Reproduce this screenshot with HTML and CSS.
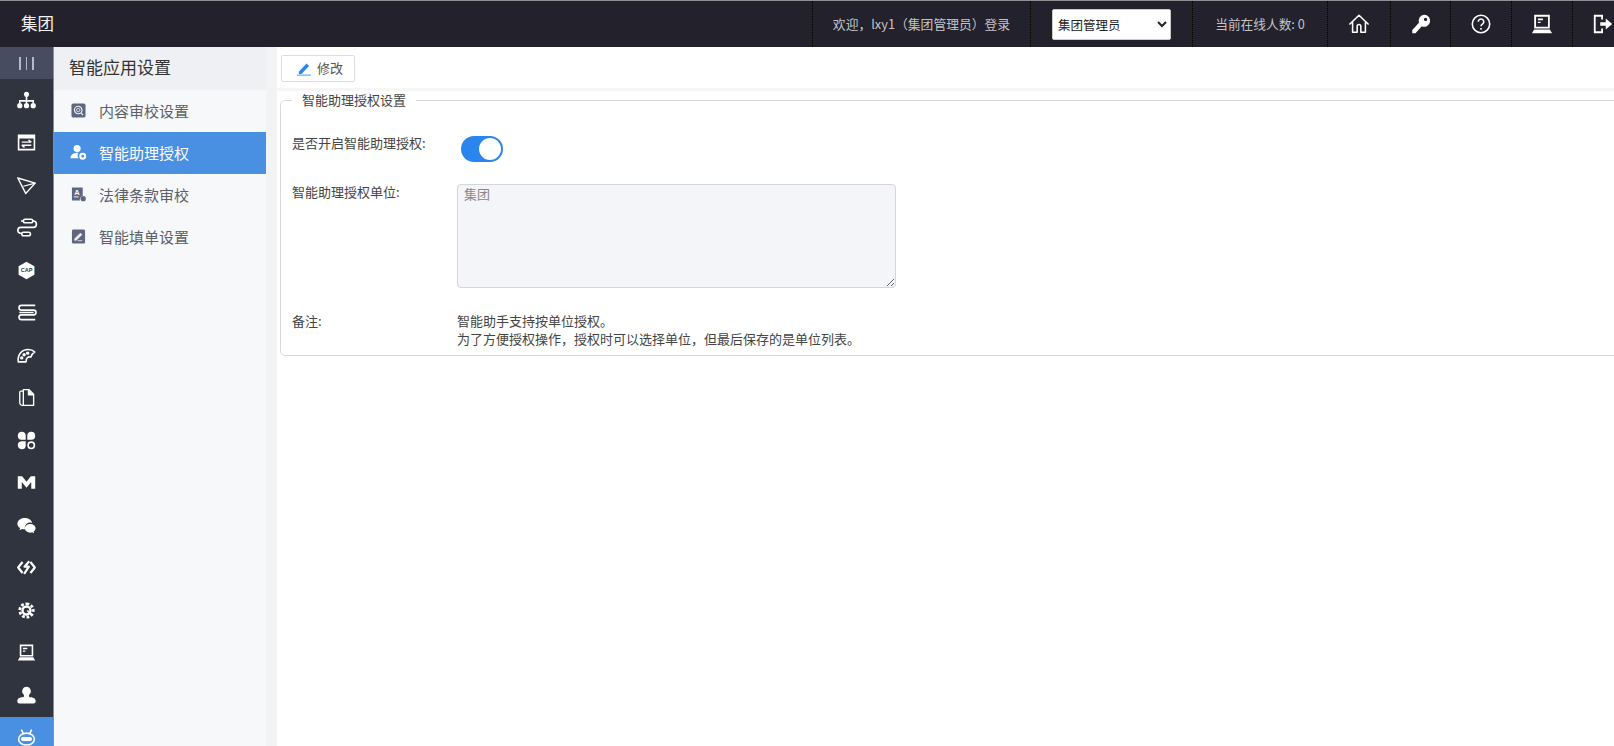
FILE: index.html
```html
<!DOCTYPE html>
<html lang="zh-CN">
<head>
<meta charset="utf-8">
<title>智能应用设置</title>
<link rel="stylesheet" href="styles.css">
</head>
<body>
<header class="topbar">
  <div class="brand">集团</div>
  <div class="cell cell-user">欢迎，lxy1（集团管理员）登录</div>
  <div class="cell cell-role">
    <select class="role-select"><option>集团管理员</option></select>
  </div>
  <div class="cell cell-online">当前在线人数: 0</div>
  <div class="cell cell-icon cell-w63">
    <svg class="ico-top" viewBox="0 0 24 24" fill="none" stroke="currentColor" stroke-width="1.7" stroke-linejoin="round"><path d="M1.500 12.500 12 2.500l10.500 10M5 10v11h5v-6.500a2 2 0 0 1 4 0V21h5V10"/></svg>
  </div>
  <div class="cell cell-icon cell-w60">
    <svg class="ico-top" viewBox="0 0 24 24" fill="currentColor"><path d="M15.500 2a6.500 6.500 0 1 1-2.700 12.400L6 22H2.500v-3.500l7.300-7.800A6.500 6.500 0 0 1 15.500 2zm1.500 3.200a1.800 1.800 0 1 0 0 3.600 1.800 1.800 0 0 0 0-3.600z"/></svg>
  </div>
  <div class="cell cell-icon cell-w61">
    <svg class="ico-top" viewBox="0 0 24 24" fill="none" stroke="currentColor" stroke-width="1.700"><circle cx="12" cy="12" r="9.500"/><path d="M9 9.500a3 3 0 1 1 4.500 2.600c-1 .6-1.500 1.200-1.500 2.400"/><path d="M12 16.300v1.900"/></svg>
  </div>
  <div class="cell cell-icon cell-w61">
    <svg class="ico-top" viewBox="0 0 24 24" fill="currentColor"><path fill-rule="evenodd" d="M3.500 2h17v15h-17zm2 2v11h13V4z"/><path d="M7.500 6h5.500v2H7.500zM7.500 9.500h3v1.500h-3zM3.500 18h17l2.500 4H1z"/></svg>
  </div>
  <div class="cell cell-icon cell-w60">
    <svg class="ico-top" viewBox="0 0 24 24" fill="none" stroke="currentColor" stroke-width="2"><path d="M11 7V3H3v18h8v-4"/><path d="M9 10h6V6l7 6-7 6v-4H9z" fill="currentColor" stroke="none"/></svg>
  </div>
</header>
<div class="shell">
  <nav class="rail">
    <div class="rail-toggle"><span class="bar"></span><span class="bar"></span><span class="bar"></span></div>
    <div class="rail-item"><svg class="ico-rail" viewBox="0 0 24 24" fill="currentColor"><circle cx="12" cy="4" r="3.200"/><path d="M11 6h2v5.500h8.500V15h-2v-1.500H13V15h-2v-1.500H4.500V15h-2v-3.500H11z"/><circle cx="3.500" cy="18.500" r="3.300"/><circle cx="12" cy="18.500" r="3.300"/><circle cx="20.500" cy="18.500" r="3.300"/></svg></div>
    <div class="rail-item"><svg class="ico-rail" viewBox="0 0 24 24"><path fill="currentColor" fill-rule="evenodd" d="M1 2h22v20H1zm2 5v13h18V7z"/><path d="M6 11.500h12M14.500 8.800l3.500 2.700M18 15.500H6M9.500 18.200 6 15.500" fill="none" stroke="currentColor" stroke-width="1.800"/></svg></div>
    <div class="rail-item"><svg class="ico-rail" viewBox="0 0 24 24" fill="none" stroke="currentColor" stroke-width="1.800" stroke-linejoin="round"><path d="M1 2.500 23 9 11 22z"/><path d="M23 9 8 13" stroke-width="1.500"/></svg></div>
    <div class="rail-item"><svg class="ico-rail" viewBox="0 0 24 24" fill="none" stroke="currentColor" stroke-width="2"><rect x="8" y="1.500" width="12" height="4.500" rx="2.250"/><rect x="6" y="18" width="11" height="4.500" rx="2.250"/><path d="M20 3.800h.5a4 4 0 0 1 0 8H5a3.800 3.800 0 0 0-1 7.500H6M8 3.800H5"/></svg></div>
    <div class="rail-item"><svg class="ico-rail" viewBox="0 0 24 24"><path fill="currentColor" d="M12 1l10 5.500v11L12 23 2 17.500v-11z"/><text class="ico-cap" x="12" y="14.500" text-anchor="middle">CAP</text></svg></div>
    <div class="rail-item"><svg class="ico-rail" viewBox="0 0 24 24" fill="none" stroke="currentColor" stroke-width="2"><path d="M23 3H5.500a3 3 0 0 0 0 6H21M3 12h18M21 9a3 3 0 0 1 0 6M23 21H5.500a3 3 0 0 1 0-6H21"/></svg></div>
    <div class="rail-item"><svg class="ico-rail" viewBox="0 0 24 24" fill="none" stroke="currentColor" stroke-width="2" stroke-linejoin="round"><path d="M1.500 20C.5 11 6 4.500 14 4.500c4 0 7 1.500 8.500 3-2.500 1.500-4 3.500-5 6.500-3-1-6.500 1-6 6z"/><circle cx="9" cy="11" r="1.200" fill="currentColor"/><circle cx="13.500" cy="9" r="1.200" fill="currentColor"/><circle cx="6" cy="15" r="1.200" fill="currentColor"/></svg></div>
    <div class="rail-item"><svg class="ico-rail" viewBox="0 0 24 24" fill="none" stroke="currentColor" stroke-width="1.700" stroke-linejoin="round"><path d="M8 6V2h7l6 6v14H8z"/><path d="M8 4H5a1.500 1.500 0 0 0-1.500 1.500v13A3.500 3.500 0 0 0 7 22h1"/><path d="M14.500 2.500V8.500H20.500" fill="currentColor"/></svg></div>
    <div class="rail-item"><svg class="ico-rail" viewBox="0 0 24 24" fill="currentColor"><path d="M11 11H5.500a5 5 0 1 1 5.500-5.500zM13 11V5.500a5 5 0 1 1 5.500 5.500zM11 13v5.500A5 5 0 1 1 5.500 13z"/><circle cx="18" cy="18" r="4" fill="none" stroke="currentColor" stroke-width="2"/></svg></div>
    <div class="rail-item"><svg class="ico-rail" viewBox="0 0 24 24" fill="currentColor"><path d="M1 20V4h5.500L12 11l5.500-7H23v16h-5v-8.500L12 18.500 6 11.500V20z"/></svg></div>
    <div class="rail-item"><svg class="ico-rail" viewBox="0 0 24 24" fill="currentColor"><path d="M9.500 2.500C4.500 2.500.5 5.700.5 9.700c0 2.300 1.300 4.200 3.400 5.500l-.8 2.800 3.200-1.700c1 .3 2.100.5 3.300.5h.6a6.800 6.800 0 0 1 9-8.200C18.100 5 14.200 2.500 9.500 2.500z"/><path d="M16.800 10c-3.800 0-6.900 2.500-6.900 5.500s3.100 5.500 6.900 5.500c.8 0 1.700-.1 2.400-.4l2.400 1.300-.6-2.200c1.500-1 2.500-2.500 2.500-4.200 0-3-3-5.500-6.700-5.500z"/></svg></div>
    <div class="rail-item"><svg class="ico-rail" viewBox="0 0 24 24" fill="none" stroke="currentColor" stroke-width="2.800" stroke-linejoin="round"><path d="M7 5 1.500 12 7 19M17 5l5.500 7-5.500 7"/><path d="M15.500 4 9.500 11h5.500l-6 9"/></svg></div>
    <div class="rail-item"><svg class="ico-rail" viewBox="0 0 24 24" fill="none" stroke="currentColor"><path stroke-width="3.500" stroke-dasharray="3.500 2.250" d="M12 3.500a8.500 8.500 0 1 1 0 17 8.500 8.500 0 0 1 0-17z"/><circle cx="12" cy="12" r="5" stroke-width="3"/><path stroke-width="2.200" d="M13 12l6 6"/></svg></div>
    <div class="rail-item"><svg class="ico-rail" viewBox="0 0 24 24" fill="currentColor"><path fill-rule="evenodd" d="M3.500 2h17v15h-17zm2 2v11h13V4z"/><path d="M7.500 6h5.500v2H7.500zM7.500 9.500h3v1.500h-3zM3.500 18h17l2.500 4H1z"/></svg></div>
    <div class="rail-item"><svg class="ico-rail" viewBox="0 0 24 24" fill="currentColor"><path d="M12 1a5.500 5.500 0 0 1 3.500 9.700c-.5 1-.5 2.300 0 3.300 3.500.5 8 1 8 4.500v1c0 1.500-1 2.500-2.500 2.500H3c-1.500 0-2.500-1-2.500-2.500v-1c0-3.500 4.500-4 8-4.500.5-1 .5-2.300 0-3.300A5.500 5.500 0 0 1 12 1z"/></svg></div>
    <div class="rail-item rail-item-active"><svg class="ico-rail" viewBox="0 0 24 24" fill="none" stroke="currentColor" stroke-width="2"><ellipse cx="12" cy="14" rx="10" ry="7.500"/><rect x="5" y="11.500" width="14" height="5" rx="2.500" fill="currentColor" stroke="none"/><path d="M5.500 2 8 7M18.500 2 16 7"/></svg></div>
  </nav>
  <aside class="side">
    <h2 class="side-title">智能应用设置</h2>
    <ul class="side-list">
      <li class="side-item">
        <svg class="ico-side" viewBox="0 0 16 16"><rect width="15" height="15" x=".5" y=".5" rx="2" fill="currentColor"/><circle cx="7.700" cy="7.500" r="4" fill="none" stroke="#f7f8fa" stroke-width="1.200"/><circle cx="7.700" cy="7.500" r="1.800" fill="none" stroke="#f7f8fa" stroke-width=".8"/><path d="M10.500 10.500l2.500 2.500" stroke="#f7f8fa" stroke-width="1.200"/></svg>
        <span>内容审校设置</span>
      </li>
      <li class="side-item side-item-active">
        <svg class="ico-side" viewBox="0 0 16 16" fill="currentColor"><circle cx="6.500" cy="3.800" r="3.800"/><path d="M-.5 14c0-3.500 2.500-5.800 8.500-5.800-1.300 1.800-1.300 4 0 5.800z"/><circle cx="12.500" cy="12" r="2.600" fill="none" stroke="currentColor" stroke-width="2.200"/></svg>
        <span>智能助理授权</span>
      </li>
      <li class="side-item">
        <svg class="ico-side" viewBox="0 0 16 16"><path fill="currentColor" d="M1 .5h11.500v9a4 4 0 0 0-3 5H1z"/><circle cx="13" cy="12.500" r="2.800" fill="currentColor"/><text class="ico-letter" x="3.500" y="8">A</text><path d="M3 10.500h5" stroke="#f7f8fa"/></svg>
        <span>法律条款审校</span>
      </li>
      <li class="side-item">
        <svg class="ico-side" viewBox="0 0 16 16"><rect width="14" height="15" x="1" y=".5" rx="1.500" fill="currentColor"/><path d="M4 10.500 10 4.500l1.500 1.500-6 6H4zM7 12.500h5" stroke="#f7f8fa" fill="#f7f8fa" stroke-width=".8"/></svg>
        <span>智能填单设置</span>
      </li>
    </ul>
  </aside>
  <div class="gutter"></div>
  <main class="main">
    <div class="toolbar">
      <button class="btn" type="button">
        <svg class="ico-btn" viewBox="0 0 14 14"><path d="M2 9.500 9.500 1.500l2.500 2.500-7.500 8-2.700.2z" fill="#2a85ee"/><path d="M0 13.200h14" stroke="#8db9ee" stroke-width="1.500"/></svg>
        <span class="btn-label">修改</span>
      </button>
    </div>
    <div class="band"></div>
    <fieldset class="panel">
      <legend class="panel-legend">智能助理授权设置</legend>
      <div class="row row-switch">
        <label class="row-label">是否开启智能助理授权:</label>
        <span class="switch"><span class="switch-knob"></span></span>
      </div>
      <div class="row row-area">
        <label class="row-label">智能助理授权单位:</label>
        <textarea class="unit-area" readonly>集团</textarea>
      </div>
      <div class="row row-note">
        <label class="row-label">备注:</label>
        <div class="note">智能助手支持按单位授权。<br>为了方便授权操作，授权时可以选择单位，但最后保存的是单位列表。</div>
      </div>
    </fieldset>
  </main>
</div>
</body>
</html>
```
FILE: styles.css
```css
* { box-sizing: border-box; }
html, body { height: 100%; }
body {
  margin: 0;
  width: 1614px;
  height: 746px;
  overflow: hidden;
  display: flex;
  flex-direction: column;
  font-family: "Noto Sans CJK SC", "Liberation Sans", sans-serif;
  font-size: 13px;
  color: #444;
  background: #fff;
}

.topbar {
  flex: none;
  height: 47px;
  display: flex;
  align-items: stretch;
  border-top: 1px solid #8f8f93;
  background: #22212c;
  color: #c4c4c8;
  overflow: hidden;
}
.brand {
  flex: none;
  width: 812px;
  padding-left: 21px;
  font-size: 16.500px;
  line-height: 45px;
  color: #f2f2f2;
}
.cell {
  flex: none;
  display: flex;
  align-items: center;
  justify-content: center;
  border-left: 1px dotted #000;
}
.cell-user { width: 218px; padding-bottom: 2px; font-size: 12.800px; white-space: nowrap; }
.cell-role { width: 162px; }
.cell-online { width: 135px; padding-bottom: 2px; font-size: 12.700px; white-space: nowrap; }
.cell-icon { color: #fff; }
.cell-w63 { width: 63px; }
.cell-w60 { width: 60px; }
.cell-w61 { width: 61px; }
.role-select {
  width: 119px;
  height: 31px;
  padding: 0 1px;
  border: 1px solid #ccc;
  border-radius: 2px;
  background: #fff;
  color: #222;
  font: 12.500px "Noto Sans CJK SC", sans-serif;
}
.ico-top { width: 22px; height: 22px; display: block; }

.shell { flex: 1; min-height: 0; display: flex; }

.rail {
  flex: none;
  width: 54px;
  display: flex;
  flex-direction: column;
  overflow: hidden;
  background: #30343f;
  color: #fff;
  border-right: 1px solid #8a8d94;
}
.rail-toggle {
  flex: none;
  height: 32px;
  display: flex;
  align-items: center;
  justify-content: center;
  gap: 5px;
  background: #474c61;
}
.bar { width: 1.500px; height: 13px; background: #b7bac4; }
.rail-item {
  flex: none;
  height: 42.500px;
  display: flex;
  align-items: center;
  justify-content: center;
}
.rail-item-active { background: #4a90e2; }
.ico-rail { width: 19px; height: 19px; display: block; overflow: visible; }
.ico-cap { font: 700 7px "Liberation Sans", sans-serif; fill: #30343f; }

.side {
  flex: none;
  width: 212px;
  background: #f7f8fa;
}
.side-title {
  margin: 0;
  height: 43px;
  padding: 0 0 3px 15px;
  background: #eef0f3;
  font-size: 17px;
  font-weight: 400;
  line-height: 40px;
  color: #333;
}
.side-list { list-style: none; margin: 0; padding: 0; }
.side-item {
  height: 42px;
  display: flex;
  align-items: center;
  gap: 14px;
  padding: 0 0 2px 17px;
  font-size: 15px;
  color: #5b6068;
}
.side-item span { margin-left: -1px; }
.side-item .ico-side { color: #5f6680; }
.side-item-active { background: #4a90e2; color: #fff; }
.side-item-active .ico-side { color: #fff; }
.ico-side { width: 15px; height: 15px; display: block; flex: none; overflow: visible; }
.ico-letter { font: 700 8px "Liberation Sans", sans-serif; fill: #f7f8fa; }

.gutter { flex: none; width: 11px; background: #f2f3f5; }

.main { flex: 1; min-width: 0; display: flex; flex-direction: column; overflow: hidden; }
.toolbar { flex: none; height: 41px; padding: 8px 0 0 4px; }
.btn {
  width: 74px;
  height: 27px;
  display: flex;
  align-items: center;
  gap: 6px;
  padding: 0 0 0 15px;
  border: 1px solid #ddd;
  border-radius: 2px;
  background: #fff;
  color: #555;
  font: 13px "Noto Sans CJK SC", sans-serif;
}
.btn-label { padding-bottom: 2px; }
.ico-btn { width: 14px; height: 14px; display: block; }
.band { flex: none; height: 3px; background: #f6f6f7; }

.panel {
  flex: none;
  width: 1400px;
  margin: 0 0 0 3px;
  padding: 23px 0 7px 11px;
  min-width: 0;
  border: 1px solid #d8d8da;
  border-radius: 5px;
}
.panel-legend {
  margin-left: 0;
  padding: 0 10px;
  font-size: 13px;
  line-height: 18px;
  color: #444;
}
.row { display: flex; }
.row-label { flex: none; width: 165px; margin-top: -1px; font-size: 13px; line-height: 18px; color: #444; }
.row-switch { height: 26px; margin-top: 4px; }
.row-switch .row-label { margin-top: -2px; }
.switch {
  margin-left: 4px;
  width: 42px;
  height: 26px;
  display: flex;
  justify-content: flex-end;
  align-items: center;
  padding-right: 2px;
  border-radius: 13px;
  background: #2a85ee;
}
.switch-knob { width: 22px; height: 22px; border-radius: 50%; background: #fff; }
.row-area { margin-top: 22px; }
.unit-area {
  display: block;
  width: 439px;
  height: 104px;
  padding: 0 6px;
  border: 1px solid #d5d6da;
  border-radius: 4px;
  background: #f4f5f9;
  color: #888;
  font: 13px/18px "Noto Sans CJK SC", sans-serif;
  outline: none;
}
.row-note { margin-top: 25px; }
.note { margin-top: -1px; font-size: 13px; line-height: 18px; color: #444; }
```
